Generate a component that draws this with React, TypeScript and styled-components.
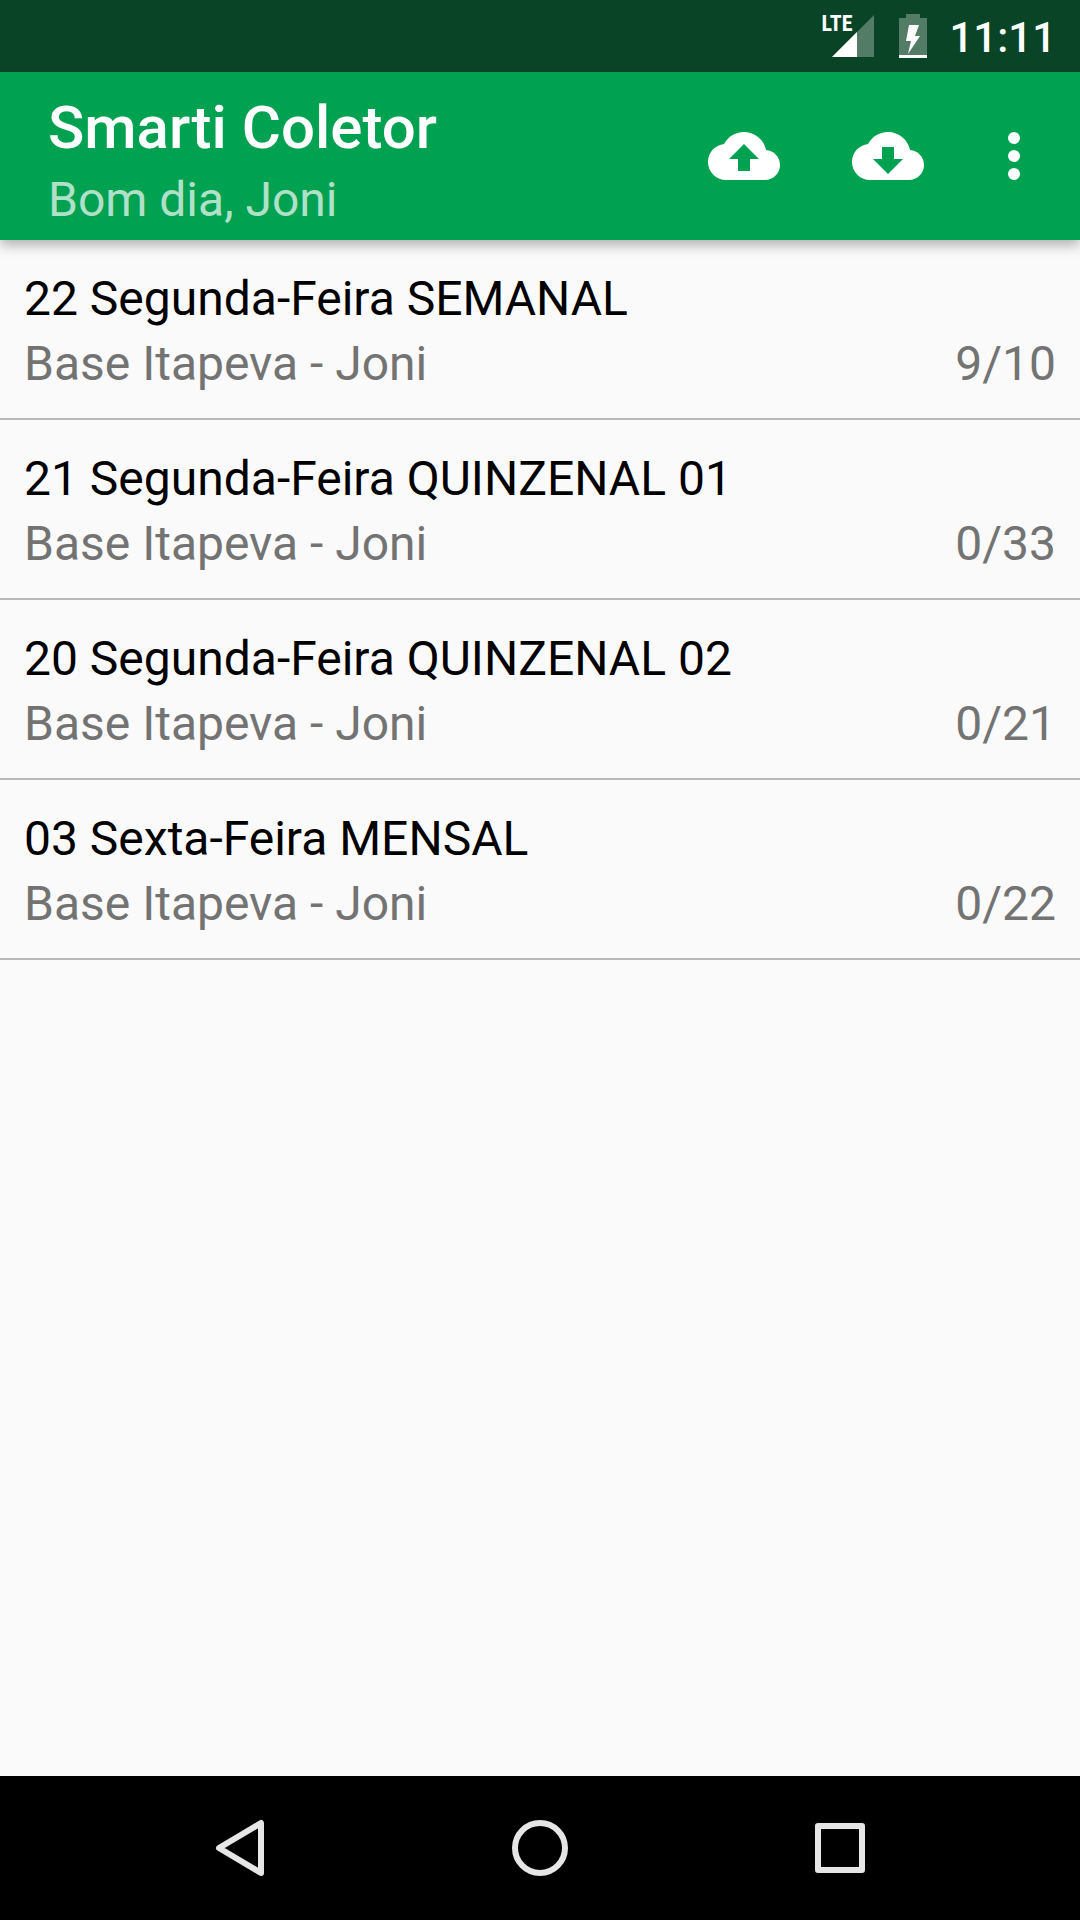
import React from "react";
import styled, { createGlobalStyle } from "styled-components";

const GlobalStyle = createGlobalStyle`
  * { box-sizing: border-box; }
  body {
    margin: 0;
    background: #fafafa;
    font-family: Roboto, "Noto Sans", sans-serif;
  }
`;

const Screen = styled.div`
  display: flex;
  flex-direction: column;
  min-height: 100vh;
`;

const StatusBar = styled.div`
  display: flex;
  align-items: center;
  justify-content: flex-end;
  height: 72px;
  padding: 0 24px;
  background: #0a4426;
  color: #fff;
`;

const Signal = styled.div`
  position: relative;
  display: flex;
  width: 54px;
  height: 44px;
  margin-right: 24px;
`;

const NetworkLabel = styled.span`
  position: absolute;
  left: 0;
  top: 0;
  font-family: "Roboto Condensed", "Liberation Sans Narrow", Roboto, sans-serif;
  font-size: 22px;
  line-height: 20px;
  font-weight: 700;
`;

const BatteryIcon = styled.svg`
  display: block;
  width: 28px;
  height: 44px;
  margin-right: 22px;
`;

const Clock = styled.time`
  padding-top: 3px;
  font-size: 42px;
  line-height: 50px;
  font-weight: 500;
`;

const AppBar = styled.header`
  position: relative;
  display: flex;
  align-items: center;
  height: 168px;
  padding: 0 12px 0 48px;
  background: #00a150;
  color: #fff;
  box-shadow: 0 5px 12px rgba(0, 0, 0, 0.3);
`;

const Titles = styled.div`
  display: flex;
  flex: 1;
  flex-direction: column;
  gap: 9px;
  padding-top: 8px;
`;

const Title = styled.h1`
  margin: 0;
  font-size: 60px;
  line-height: 70px;
  font-weight: 500;
`;

const Subtitle = styled.p`
  margin: 0;
  font-size: 48px;
  line-height: 56px;
  color: rgba(255, 255, 255, 0.7);
`;

const ActionButton = styled.button<{ $width: number }>`
  display: flex;
  align-items: center;
  justify-content: center;
  width: ${(p) => p.$width}px;
  height: 144px;
  padding: 0;
  border: 0;
  background: transparent;
  color: inherit;

  svg {
    width: 72px;
    height: 72px;
    fill: currentColor;
  }
`;

const RouteList = styled.ul`
  flex: 1;
  margin: 0;
  padding: 0;
  list-style: none;
`;

const RouteItem = styled.li`
  display: flex;
  flex-direction: column;
  gap: 9px;
  padding: 31px 24px 26px;
  border-bottom: 2px solid #b8b8b8;
  font-size: 48px;
  line-height: 56px;
`;

const RouteName = styled.span`
  color: #000;
`;

const RouteDetails = styled.div`
  display: flex;
  justify-content: space-between;
  color: #737373;
`;

const NavBar = styled.nav`
  display: flex;
  justify-content: center;
  height: 144px;
  background: #000;
`;

const NavButton = styled.button`
  display: flex;
  align-items: center;
  justify-content: center;
  width: 300px;
  padding: 0;
  border: 0;
  background: transparent;

  svg {
    width: 72px;
    height: 72px;
    fill: none;
    stroke: #e6e6e6;
    stroke-width: 6;
    stroke-linejoin: round;
  }
`;

const routes = [
  { name: "22 Segunda-Feira SEMANAL", base: "Base Itapeva - Joni", progress: "9/10" },
  { name: "21 Segunda-Feira QUINZENAL 01", base: "Base Itapeva - Joni", progress: "0/33" },
  { name: "20 Segunda-Feira QUINZENAL 02", base: "Base Itapeva - Joni", progress: "0/21" },
  { name: "03 Sexta-Feira MENSAL", base: "Base Itapeva - Joni", progress: "0/22" },
];

const CLOUD =
  "M19.35 10.04C18.67 6.59 15.64 4 12 4 9.11 4 6.6 5.64 5.35 8.04 2.34 8.36 0 10.91 0 14c0 3.31 2.69 6 6 6h13c2.76 0 5-2.24 5-5 0-2.64-2.05-4.78-4.65-4.96z";

export default function App() {
  return (
    <Screen>
      <GlobalStyle />
      <StatusBar>
        <Signal>
          <svg width="54" height="44" viewBox="0 0 54 44" aria-hidden="true">
            <path d="M53 1V43H11z" fill="#fff" fillOpacity=".3" />
            <path d="M36 18V43H11z" fill="#fff" />
          </svg>
          <NetworkLabel>LTE</NetworkLabel>
        </Signal>
        <BatteryIcon viewBox="0 0 28 44" aria-hidden="true">
          <path d="M7 0h14v4h7v37H0V4h7z" fill="#fff" fillOpacity=".3" />
          <path d="M0 41h28v3H0z" fill="#fff" />
          <path d="M10 11h10l-4 11h5L9 40l3-13H7z" fill="#fff" />
        </BatteryIcon>
        <Clock>11:11</Clock>
      </StatusBar>
      <AppBar>
        <Titles>
          <Title>Smarti Coletor</Title>
          <Subtitle>Bom dia, Joni</Subtitle>
        </Titles>
        <ActionButton $width={144} aria-label="Enviar">
          <svg viewBox="0 0 24 24" fillRule="evenodd">
            <path d={`${CLOUD}M14 13v4h-4v-4H7l5-5 5 5h-3z`} />
          </svg>
        </ActionButton>
        <ActionButton $width={144} aria-label="Baixar">
          <svg viewBox="0 0 24 24" fillRule="evenodd">
            <path d={`${CLOUD}M17 13l-5 5-5-5h3V9h4v4h3z`} />
          </svg>
        </ActionButton>
        <ActionButton $width={108} aria-label="Mais opções">
          <svg viewBox="0 0 24 24">
            <circle cx="12" cy="6" r="2" />
            <circle cx="12" cy="12" r="2" />
            <circle cx="12" cy="18" r="2" />
          </svg>
        </ActionButton>
      </AppBar>
      <RouteList>
        {routes.map((route) => (
          <RouteItem key={route.name}>
            <RouteName>{route.name}</RouteName>
            <RouteDetails>
              <span>{route.base}</span>
              <span>{route.progress}</span>
            </RouteDetails>
          </RouteItem>
        ))}
      </RouteList>
      <NavBar>
        <NavButton aria-label="Voltar">
          <svg viewBox="0 0 72 72">
            <path d="M57 11V61L15 36z" />
          </svg>
        </NavButton>
        <NavButton aria-label="Início">
          <svg viewBox="0 0 72 72">
            <circle cx="36" cy="36" r="25" />
          </svg>
        </NavButton>
        <NavButton aria-label="Recentes">
          <svg viewBox="0 0 72 72">
            <rect x="14" y="14" width="44" height="44" />
          </svg>
        </NavButton>
      </NavBar>
    </Screen>
  );
}
